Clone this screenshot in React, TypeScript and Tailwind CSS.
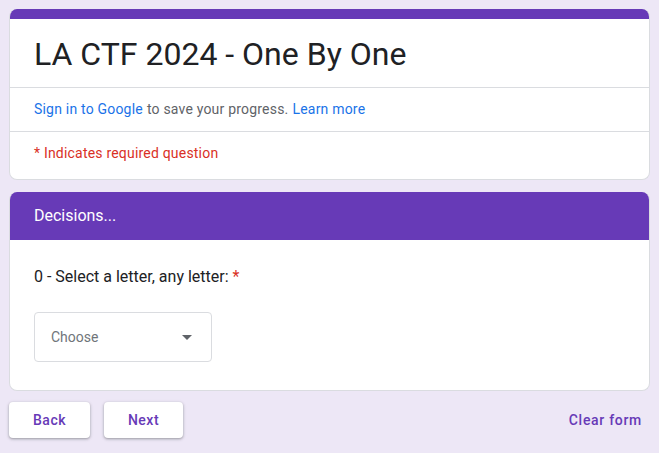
import React from "react";

export default function App() {
  return (
    <div
      className="w-[659px] h-[453px] bg-[#ede7f6] overflow-hidden px-[9px] pt-[9px]"
      style={{ fontFamily: "Roboto, 'Liberation Sans', sans-serif" }}
    >
      <div className="rounded-[8px] overflow-hidden bg-white border border-[#dadce0] border-t-0">
        <div className="h-[10px] bg-[#673ab7]" />
        <div className="px-[24px] pt-[15px] pb-[13px] border-b border-[#dadce0]">
          <h1 className="text-[32px] leading-[40px] text-[#202124]">LA CTF 2024 - One By One</h1>
        </div>
        <div className="px-[24px] h-[44px] flex items-center border-b border-[#dadce0] text-[14px] tracking-[0.2px] text-[#5f6368]">
          <span className="text-[#1a73e8]">Sign in to Google</span>
          <span className="ml-[4px]">to save your progress.</span>
          <span className="ml-[4px] text-[#1a73e8]">Learn more</span>
        </div>
        <div className="px-[24px] h-[47px] pb-[4px] flex items-center text-[14px] tracking-[0.2px] text-[#d93025]">
          * Indicates required question
        </div>
      </div>

      <div className="mt-[12px] rounded-[8px] overflow-hidden bg-white border border-[#dadce0] border-t-0">
        <div className="h-[48px] bg-[#673ab7] px-[24px] flex items-center text-white text-[16px]">
          Decisions...
        </div>
        <div className="px-[24px] pt-[25px] pb-[28px]">
          <div className="text-[16px] leading-[24px] text-[#202124]">
            0 - Select a letter, any letter: <span className="text-[#d93025]">*</span>
          </div>
          <div className="mt-[23px] w-[178px] h-[50px] border border-[#dadce0] rounded-[4px] flex items-center pl-[16px] pr-[19px] justify-between">
            <span className="text-[14px] text-[#70757a]">Choose</span>
            <svg width="10" height="5" viewBox="0 0 10 5">
              <path d="M0 0 L10 0 L5 5 Z" fill="#5f6368" />
            </svg>
          </div>
        </div>
      </div>

      <div className="mt-[11px] flex items-center">
        <button className="w-[81px] h-[36px] bg-white rounded-[4px] shadow-[0_1px_2px_0_rgba(60,64,67,0.3),0_1px_3px_1px_rgba(60,64,67,0.15)] text-[14px] tracking-[0.5px] font-medium text-[#673ab7]">
          Back
        </button>
        <button className="ml-[14px] w-[79px] h-[36px] bg-white rounded-[4px] shadow-[0_1px_2px_0_rgba(60,64,67,0.3),0_1px_3px_1px_rgba(60,64,67,0.15)] text-[14px] tracking-[0.5px] font-medium text-[#673ab7]">
          Next
        </button>
        <div className="ml-auto mr-[8px] text-[14px] tracking-[0.7px] font-medium text-[#673ab7]">Clear form</div>
      </div>
    </div>
  );
}
